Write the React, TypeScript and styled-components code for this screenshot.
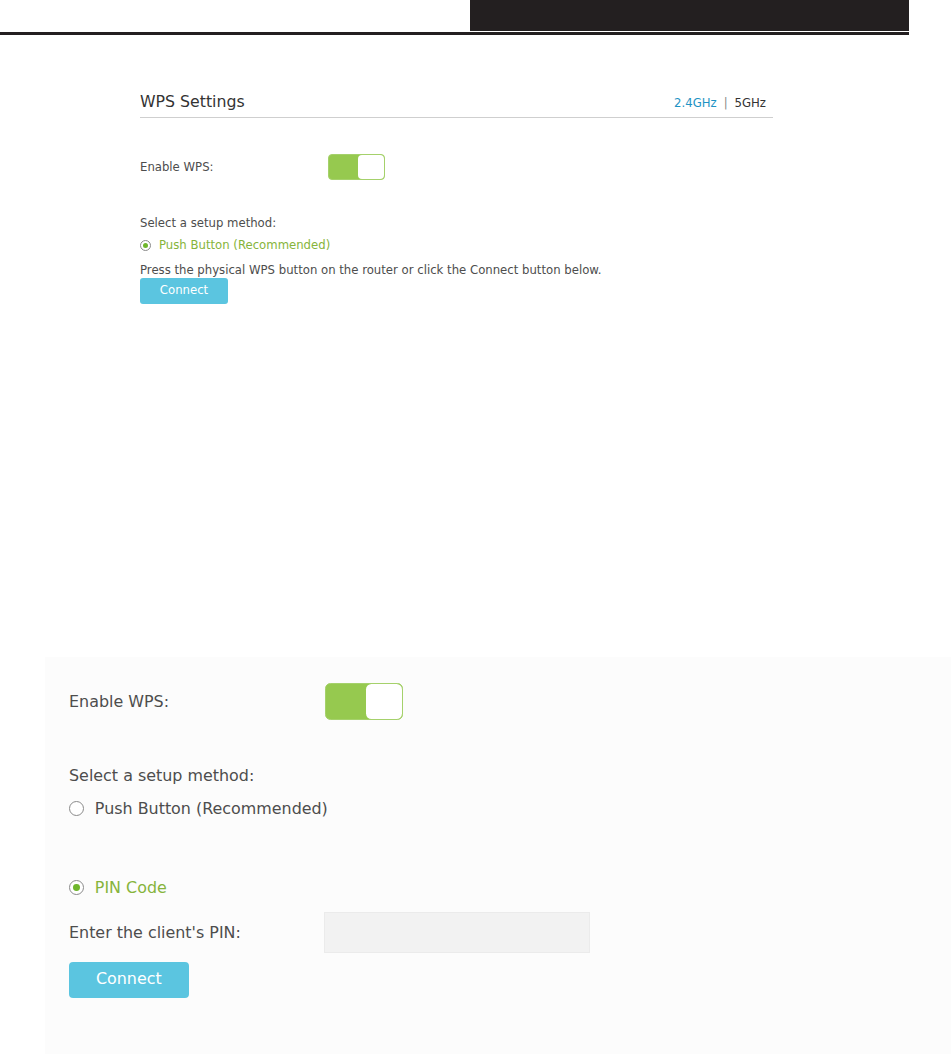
import React from 'react';
import styled, { createGlobalStyle } from 'styled-components';

const GlobalStyle = createGlobalStyle`
  html, body {
    margin: 0;
    padding: 0;
    background: #fff;
  }
  body {
    font-family: "DejaVu Sans", Verdana, sans-serif;
    color: #4d4d4d;
  }
`;

const FS = 11.7;

const Page = styled.div`
  width: 951px;
  height: 1054px;
  overflow: hidden;
`;

const Header = styled.div`
  display: flex;
  justify-content: flex-end;
  width: 909px;
  border-bottom: 3px solid #231f20;
`;

const HeaderTab = styled.div`
  width: 439px;
  height: 31px;
  background: #231f20;
  border-bottom: 1px solid #fff;
`;

const Section = styled.div`
  margin-left: 140px;
  width: 633px;
  padding-top: 57px;
`;

const TitleBar = styled.div`
  display: flex;
  justify-content: space-between;
  align-items: baseline;
  padding-bottom: 6px;
  border-bottom: 1px solid #cfcfcf;
`;

const Title = styled.div`
  font-size: 15.75px;
  line-height: 19px;
  color: #333;
`;

const Bands = styled.div`
  display: flex;
  gap: 7px;
  font-size: ${FS}px;
  padding-right: 7px;
`;

const Band = styled.span<{ $active?: boolean }>`
  color: ${p => (p.$active ? '#1e93c4' : '#333')};
`;

const Sep = styled.span`
  color: #888;
`;

const Row = styled.div<{ $h: number }>`
  display: flex;
  align-items: center;
  height: ${p => p.$h}px;
`;

const Label = styled.div<{ $s: number; $w?: number }>`
  font-size: ${p => FS * p.$s}px;
  color: #4d4d4d;
  width: ${p => (p.$w ? `${p.$w}px` : 'auto')};
`;

const Toggle = styled.div<{ $s: number; $h: number }>`
  display: flex;
  justify-content: flex-end;
  width: ${p => 57 * p.$s}px;
  height: ${p => p.$h}px;
  box-sizing: border-box;
  background: #96c94f;
  border: 1px solid #a5d16b;
  border-radius: ${p => 4 * p.$s}px;
`;

const Knob = styled.div<{ $s: number }>`
  width: ${p => 26 * p.$s}px;
  height: 100%;
  background: #fff;
  border-radius: ${p => 4 * p.$s}px;
`;

const Text = styled.div<{ $s: number }>`
  font-size: ${p => FS * p.$s}px;
  color: #4d4d4d;
  line-height: ${p => 14 * p.$s}px;
`;

const Option = styled.div<{ $s: number; $on?: boolean }>`
  display: flex;
  align-items: center;
  gap: ${p => 8 * p.$s}px;
  font-size: ${p => FS * p.$s}px;
  line-height: ${p => 14 * p.$s}px;
  color: ${p => (p.$on ? '#86b43b' : '#4d4d4d')};
`;

const Radio = styled.span<{ $s: number; $on?: boolean }>`
  display: inline-flex;
  align-items: center;
  justify-content: center;
  box-sizing: border-box;
  width: ${p => 11 * p.$s}px;
  height: ${p => 11 * p.$s}px;
  border-radius: 50%;
  border: 1px solid #8a8a8a;
  background: #fff;

  &::after {
    content: '';
    display: ${p => (p.$on ? 'block' : 'none')};
    width: ${p => 5 * p.$s}px;
    height: ${p => 5 * p.$s}px;
    border-radius: 50%;
    background: #6fb62c;
  }
`;

const Button = styled.button<{ $s: number; $h: number }>`
  display: block;
  width: ${p => 88 * p.$s}px;
  height: ${p => p.$h}px;
  border: none;
  border-radius: ${p => 3 * p.$s}px;
  background: #5bc5e0;
  color: #fff;
  font-family: inherit;
  font-size: ${p => FS * p.$s}px;
  padding: 0 0 ${p => 2 * p.$s}px;
`;

const Panel = styled.div`
  margin: 353px 0 0 45px;
  height: 397px;
  background: #fcfcfc;
  padding: 26px 0 0 24px;
  box-sizing: border-box;
`;

const PinInput = styled.div`
  width: 266px;
  height: 41px;
  box-sizing: border-box;
  background: #f2f2f2;
  border: 1px solid #ebebeb;
`;

const Gap = styled.div<{ $h: number }>`
  height: ${p => p.$h}px;
`;

export default function App() {
  const big = 1.36;
  return (
    <Page>
      <GlobalStyle />
      <Header>
        <HeaderTab />
      </Header>

      <Section>
        <TitleBar>
          <Title>WPS Settings</Title>
          <Bands>
            <Band $active>2.4GHz</Band>
            <Sep>|</Sep>
            <Band>5GHz</Band>
          </Bands>
        </TitleBar>
        <Gap $h={36} />
        <Row $h={26}>
          <Label $s={1} $w={188}>Enable WPS:</Label>
          <Toggle $s={1} $h={26}>
            <Knob $s={1} />
          </Toggle>
        </Row>
        <Gap $h={36} />
        <Text $s={1}>Select a setup method:</Text>
        <Gap $h={8} />
        <Option $s={1} $on>
          <Radio $s={1} $on />
          Push Button (Recommended)
        </Option>
        <Gap $h={11} />
        <Text $s={1}>Press the physical WPS button on the router or click the Connect button below.</Text>
        <Gap $h={1} />
        <Button $s={1} $h={26}>Connect</Button>
      </Section>

      <Panel>
        <Row $h={37}>
          <Label $s={big} $w={256}>Enable WPS:</Label>
          <Toggle $s={big} $h={37}>
            <Knob $s={big} />
          </Toggle>
        </Row>
        <Gap $h={46} />
        <Text $s={big}>Select a setup method:</Text>
        <Gap $h={14} />
        <Option $s={big}>
          <Radio $s={big} />
          Push Button (Recommended)
        </Option>
        <Gap $h={60} />
        <Option $s={big} $on>
          <Radio $s={big} $on />
          PIN Code
        </Option>
        <Gap $h={15} />
        <Row $h={41}>
          <Label $s={big} $w={255}>Enter the client's PIN:</Label>
          <PinInput />
        </Row>
        <Gap $h={9} />
        <Button $s={big} $h={36}>Connect</Button>
      </Panel>
    </Page>
  );
}
